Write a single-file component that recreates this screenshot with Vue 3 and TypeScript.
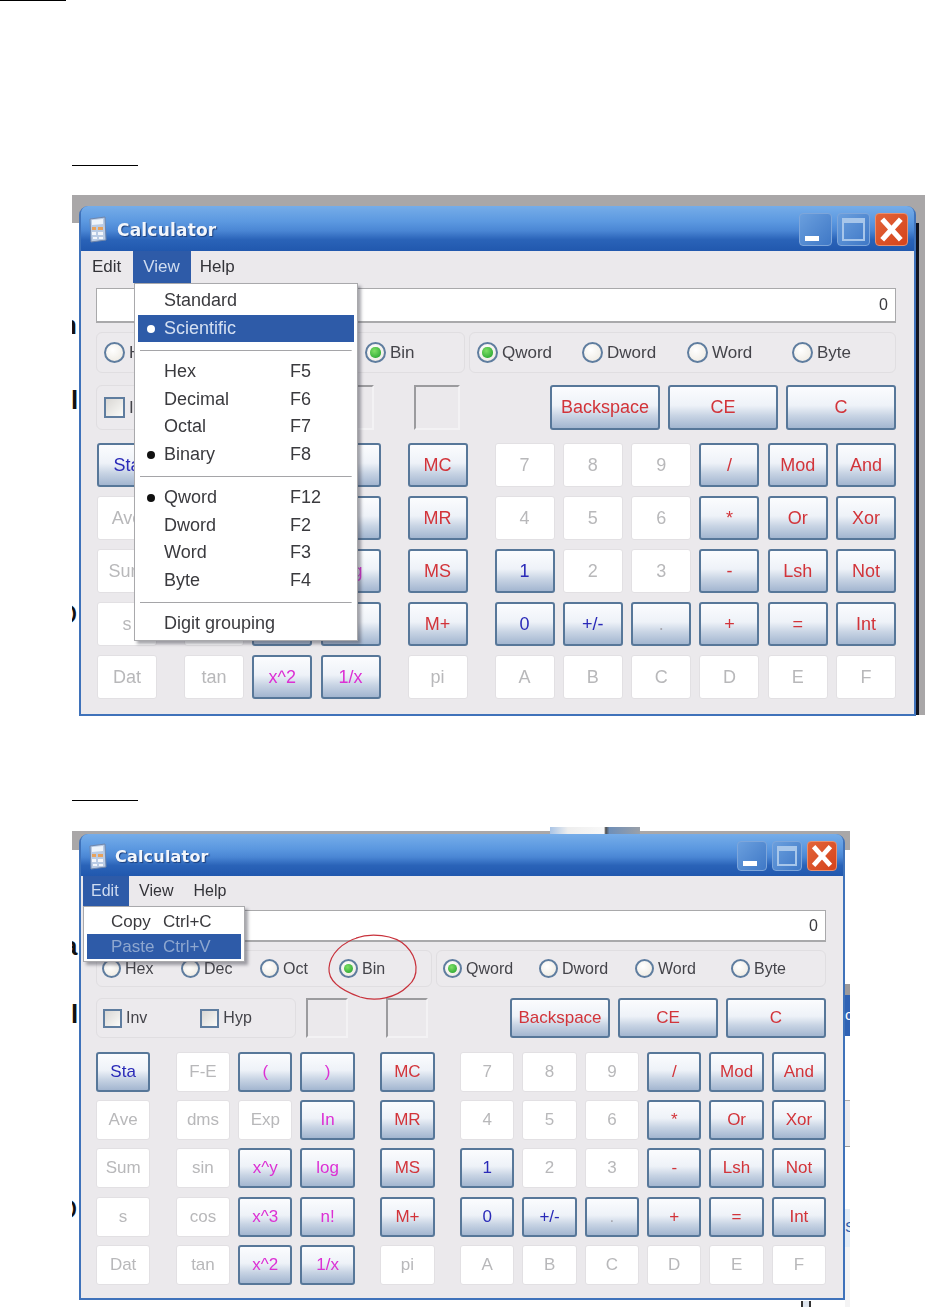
<template>
  <div class="page">
    <div class="rule rule-top"></div>
    <div class="rule rule-one"></div>

    <template v-for="win in windows" :key="win.id">
      <div v-if="win.id === 'win-b'" class="rule rule-two"></div>

      <div class="figure" :class="win.id">
        <span v-for="scrap in win.scraps" :key="scrap.text" class="scrap" :class="scrap.cls">{{ scrap.text }}</span>

        <div class="window">
          <div class="titlebar">
            <svg class="app-icon" viewBox="0 0 20 27">
              <path d="M2 3 L17 1 L18 24 L3 26 Z" fill="#b9cbe4" stroke="#6f86ab" />
              <path d="M4 4 L15 3 L15 8 L4 9 Z" fill="#eef4fb" />
              <path d="M4 11 h4 v3 h-4 z M10 11 h5 v3 h-5 z" fill="#e8a25c" />
              <path d="M4 16 h4 v3 h-4 z M10 16 h5 v3 h-5 z M5 21 h4 v2 h-4 z M11 21 h4 v2 h-4 z" fill="#f3f6fb" />
            </svg>
            <span class="title-text">Calculator</span>
            <div class="win-buttons">
              <span class="win-btn min"><i></i></span>
              <span class="win-btn max"><i></i></span>
              <span class="win-btn close">
                <svg viewBox="0 0 30 30"><path d="M6 5 L24 25 M24 5 L6 25" stroke="#fff" stroke-width="5" /></svg>
              </span>
            </div>
          </div>

          <div class="menubar">
            <span v-for="m in menuNames" :key="m" class="menubar-item" :class="{ open: m === win.openMenu }">{{ m }}</span>
          </div>

          <div class="content">
            <div class="display">0</div>

            <div class="radio-row">
              <div class="panel base-panel">
                <label v-for="r in baseRadios" :key="r" class="radio-item">
                  <span class="radio" :class="{ on: r === 'Bin' }"></span>{{ r }}
                </label>
              </div>
              <div class="panel size-panel">
                <label v-for="r in sizeRadios" :key="r" class="radio-item">
                  <span class="radio" :class="{ on: r === 'Qword' }"></span>{{ r }}
                </label>
              </div>
            </div>

            <div class="func-row">
              <div class="panel check-panel">
                <label v-for="c in ['Inv', 'Hyp']" :key="c" class="radio-item">
                  <span class="check"></span>{{ c }}
                </label>
              </div>
              <div class="inset first"></div>
              <div class="inset second"></div>
              <div class="wide-keys">
                <button v-for="k in wideKeys" :key="k" class="key wide red" type="button">{{ k }}</button>
              </div>
            </div>

            <div class="keys">
              <div v-for="(row, r) in keyRows" :key="r" class="key-row">
                <button
                  v-for="(k, i) in row"
                  :key="k.label"
                  class="key"
                  :class="[k.kind, { sep: [1, 4, 5].includes(i) }]"
                  type="button"
                >
                  {{ k.label }}
                </button>
              </div>
            </div>
          </div>

          <div class="dropdown" role="menu">
            <template v-for="(item, n) in win.menu" :key="n">
              <div v-if="item.sep" class="menu-sep"></div>
              <div v-else class="menu-item" :class="{ hot: item.hot, dimmed: item.dimmed, checked: item.checked }">
                <span>{{ item.label }}</span>
                <span>{{ item.keys }}</span>
              </div>
            </template>
          </div>

          <svg v-if="win.id === 'win-b'" class="circle-mark" viewBox="0 0 94 70">
            <path d="M30 6 C44 1 68 2 80 14 C92 26 94 44 82 54 C70 66 50 70 34 65 C14 58 2 48 3 36 C4 22 16 10 34 5" />
          </svg>
        </div>

        <div v-if="win.id === 'win-a'" class="edge-a"></div>
        <template v-else>
          <div class="edge-b">
            <i class="e1"></i><i class="e2">c</i><i class="e3"></i><i class="e4"></i><i class="e5"></i><i class="e6">S</i><i class="e7"></i>
          </div>
          <div class="top-scrap"></div>
          <div class="under-scrap"></div>
        </template>
      </div>
    </template>
  </div>
</template>

<script setup lang="ts">
type Kind = 'off' | 'red' | 'pink' | 'blue' | 'dim';

interface MenuEntry {
  label?: string;
  keys?: string;
  sep?: boolean;
  hot?: boolean;
  dimmed?: boolean;
  checked?: boolean;
}

const menuNames = ['Edit', 'View', 'Help'];
const baseRadios = ['Hex', 'Dec', 'Oct', 'Bin'];
const sizeRadios = ['Qword', 'Dword', 'Word', 'Byte'];
const wideKeys = ['Backspace', 'CE', 'C'];

const makeRow = (spec: string): { label: string; kind: Kind }[] =>
  spec.split(' ').map((part) => {
    const [label, code] = part.split('|');
    const kinds: Record<string, Kind> = { o: 'off', r: 'red', p: 'pink', b: 'blue', d: 'dim' };
    return { label, kind: kinds[code] };
  });

const keyRows = [
  makeRow('Sta|b F-E|o (|p )|p MC|r 7|o 8|o 9|o /|r Mod|r And|r'),
  makeRow('Ave|o dms|o Exp|o In|p MR|r 4|o 5|o 6|o *|r Or|r Xor|r'),
  makeRow('Sum|o sin|o x^y|p log|p MS|r 1|b 2|o 3|o -|r Lsh|r Not|r'),
  makeRow('s|o cos|o x^3|p n!|p M+|r 0|b +/-|b .|d +|r =|r Int|r'),
  makeRow('Dat|o tan|o x^2|p 1/x|p pi|o A|o B|o C|o D|o E|o F|o'),
];

const viewMenu: MenuEntry[] = [
  { label: 'Standard' },
  { label: 'Scientific', hot: true, checked: true },
  { sep: true },
  { label: 'Hex', keys: 'F5' },
  { label: 'Decimal', keys: 'F6' },
  { label: 'Octal', keys: 'F7' },
  { label: 'Binary', keys: 'F8', checked: true },
  { sep: true },
  { label: 'Qword', keys: 'F12', checked: true },
  { label: 'Dword', keys: 'F2' },
  { label: 'Word', keys: 'F3' },
  { label: 'Byte', keys: 'F4' },
  { sep: true },
  { label: 'Digit grouping' },
];

const editMenu: MenuEntry[] = [
  { label: 'Copy', keys: 'Ctrl+C' },
  { label: 'Paste', keys: 'Ctrl+V', hot: true, dimmed: true },
];

const windows = [
  {
    id: 'win-a',
    openMenu: 'View',
    menu: viewMenu,
    scraps: [
      { text: 'n', cls: 's1' },
      { text: 'l', cls: 's2' },
      { text: 'O', cls: 's3' },
    ],
  },
  {
    id: 'win-b',
    openMenu: 'Edit',
    menu: editMenu,
    scraps: [
      { text: 'a', cls: 's1' },
      { text: 'l', cls: 's2' },
      { text: 'O', cls: 's3' },
    ],
  },
];
</script>

<style>
html,
body {
  margin: 0;
  background: #fff;
}
</style>

<style scoped>
.page {
  height: 1307px;
  overflow: hidden;
  background: #fff;
  color: #3a3a3e;
  font-family: "Liberation Sans", Arial, sans-serif;
}

.rule {
  height: 1px;
  background: #000;
}

.rule-top {
  width: 66px;
}

.rule-one {
  width: 66px;
  margin: 164px 0 0 72px;
}

.rule-two {
  width: 66px;
  margin: 80px 0 0 72px;
}

.figure {
  position: relative;
  overflow: hidden;
  margin-left: 72px;
}

.win-a {
  --title-h: 43px;
  --menu-h: 32px;
  --font: 18px;
  --label-font: 17px;
  --display-h: 35px;
  --gap-1: 5px;
  --gap-2: 9px;
  --gap-3: 12px;
  --gap-4: 13px;
  --radio-h: 41px;
  --func-h: 45px;
  --key-w: 60px;
  --key-h: 44px;
  --key-gap: 8.3px;
  --key-sep: 18.7px;
  --row-gap: 9px;
  --radio: 21px;
  width: 853px;
  height: 525px;
  margin-top: 29px;
  padding: 11px 0 0 7px;
  box-sizing: border-box;
  background: linear-gradient(#a9a7a8, #a9a7a8) no-repeat 0 0 / 100% 28px;
}

.win-b {
  --title-h: 40px;
  --menu-h: 30px;
  --font: 17px;
  --label-font: 16px;
  --display-h: 32px;
  --gap-1: 4px;
  --gap-2: 8px;
  --gap-3: 11px;
  --gap-4: 14px;
  --radio-h: 37px;
  --func-h: 40px;
  --key-w: 54.3px;
  --key-h: 40px;
  --key-gap: 8.1px;
  --key-sep: 17.5px;
  --row-gap: 8.2px;
  --radio: 19px;
  width: 778px;
  height: 480px;
  margin-top: 26px;
  padding: 7px 0 0 7px;
  box-sizing: border-box;
  background: linear-gradient(#a9a7a8, #a9a7a8) no-repeat 0 4px / 100% 19px;
}

.window {
  position: relative;
  z-index: 1;
  display: flex;
  flex-direction: column;
  box-sizing: border-box;
  border: 2px solid #3f72ba;
  border-radius: 9px 9px 0 0;
  background: #ebe9ec;
  font-size: var(--font);
  filter: blur(0.4px);
}

.win-a .window {
  width: 837px;
  height: 510px;
}

.win-b .window {
  width: 766px;
  height: 466px;
}

.titlebar {
  display: flex;
  align-items: center;
  height: var(--title-h);
  margin-top: -2px;
  padding-top: 2px;
  padding-left: 7px;
  border-radius: 7px 7px 0 0;
  background: linear-gradient(#76ade9 0%, #5b98e0 35%, #4a86d4 55%, #2a63b8 75%, #2158ae 100%);
}

.app-icon {
  width: 20px;
  height: 27px;
}

.title-text {
  margin-left: 9px;
  color: #f2f6fb;
  font-family: "DejaVu Sans", Verdana, sans-serif;
  font-size: 17px;
  font-weight: 700;
  letter-spacing: 0.2px;
  text-shadow: 1px 1px 1px #1c3f7c;
}

.win-b .title-text {
  margin-left: 7px;
  font-size: 16px;
}

.win-buttons {
  display: flex;
  gap: 5px;
  margin-left: auto;
  margin-right: 6px;
}

.win-btn {
  display: block;
  position: relative;
  box-sizing: border-box;
  width: 33px;
  height: 33px;
  border: 1px solid #7ea6da;
  border-radius: 4px;
  background: linear-gradient(135deg, #6a9fde, #3f78c6);
}

.win-b .win-btn {
  width: 30px;
  height: 30px;
}

.win-btn.min i {
  position: absolute;
  left: 5px;
  bottom: 4px;
  width: 14px;
  height: 5px;
  background: #fff;
}

.win-btn.max i {
  position: absolute;
  inset: 4px;
  border: 2px solid #a7c6ea;
  border-top-width: 5px;
}

.win-btn.close {
  border-color: #e88f6e;
  background: linear-gradient(135deg, #e2643a, #d5431b);
}

.win-btn.close svg {
  display: block;
  width: 100%;
  height: 100%;
}

.menubar {
  display: flex;
  height: var(--menu-h);
  color: #333338;
  font-size: 17px;
}

.win-b .menubar {
  padding-left: 2px;
  font-size: 16px;
}

.menubar-item {
  display: flex;
  align-items: center;
  padding: 0 10px;
}

.win-a .menubar-item:first-child {
  padding: 0 12px 0 11px;
}

.win-a .menubar-item:nth-child(2) {
  padding: 0 11px 0 10px;
}

.win-a .menubar-item:last-child {
  padding-left: 9px;
}

.win-b .menubar-item:first-child {
  padding: 0 10.5px 0 8px;
}

.menubar-item.open {
  background: #2e5ba8;
  color: #cfdcf0;
}

.content {
  padding: 0 17px 0 15px;
}

.win-a .content {
  padding-right: 18px;
}

.display {
  box-sizing: border-box;
  height: var(--display-h);
  margin-top: var(--gap-1);
  padding-right: 7px;
  border: 1px solid #a9a9ab;
  border-bottom-width: 2px;
  background: #fff;
  font-size: 16px;
  line-height: calc(var(--display-h) - 3px);
  text-align: right;
}

.radio-row {
  display: flex;
  gap: 4px;
  margin-top: var(--gap-2);
}

.panel {
  box-sizing: border-box;
  height: var(--radio-h);
  border: 1px solid #e0dee1;
  border-radius: 6px;
  background: #eceaed;
}

.base-panel,
.size-panel {
  display: grid;
  align-items: center;
}

.base-panel {
  flex-shrink: 0;
}

.size-panel {
  flex: 1;
  min-width: 0;
}

.win-a .base-panel {
  width: 369px;
  padding-left: 7px;
  grid-template-columns: repeat(4, 87px);
}

.win-a .size-panel {
  padding-left: 7px;
  grid-template-columns: repeat(4, 105px);
}

.win-b .base-panel {
  width: 336px;
  padding-left: 5px;
  grid-template-columns: repeat(4, 79px);
}

.win-b .size-panel {
  padding-left: 6px;
  grid-template-columns: repeat(4, 96px);
}

.radio-item {
  display: flex;
  align-items: center;
  gap: 4px;
  color: #44444a;
  font-size: var(--label-font);
}

.radio {
  display: grid;
  place-items: center;
  box-sizing: border-box;
  width: var(--radio);
  height: var(--radio);
  border: 2px solid #5f7d9f;
  border-radius: 50%;
  background: radial-gradient(circle at 40% 35%, #fff, #ebe7de);
}

.radio.on::after {
  content: "";
  width: 60%;
  height: 60%;
  border-radius: 50%;
  background: radial-gradient(circle at 40% 35%, #7fe065, #1c9d2a);
}

.check {
  box-sizing: border-box;
  width: var(--radio);
  height: var(--radio);
  border: 2px solid #5f7d9f;
  background: linear-gradient(135deg, #d9d7d4, #fbfbf8);
}

.func-row {
  display: flex;
  height: var(--func-h);
  margin-top: var(--gap-3);
}

.check-panel {
  display: flex;
  align-items: center;
  height: 100%;
  padding-left: 7px;
}

.win-a .check-panel {
  width: 220px;
  gap: 58px;
}

.win-b .check-panel {
  width: 200px;
  padding-left: 6px;
  gap: 53px;
}

.inset {
  box-sizing: border-box;
  height: 100%;
  border: 2px solid #f3f2f4;
  border-top-color: #9b9b9e;
  border-left-color: #9b9b9e;
}

.win-a .inset.first {
  width: 44px;
  margin-left: 14px;
}

.win-a .inset.second {
  width: 46px;
  margin-left: 40px;
}

.win-b .inset.first {
  width: 42px;
  margin-left: 10px;
}

.win-b .inset.second {
  width: 42px;
  margin-left: 38px;
}

.wide-keys {
  display: flex;
  gap: 8px;
  margin-left: auto;
}

.key {
  box-sizing: border-box;
  width: var(--key-w);
  height: var(--key-h);
  padding: 0;
  border: 2px solid #577799;
  border-radius: 3px;
  background: linear-gradient(#fbfcfe 0%, #eef2f8 45%, #c8d4e4 70%, #a3b6d0 100%);
  font-family: inherit;
  font-size: var(--font);
}

.key.wide {
  height: 100%;
}

.win-a .key.wide {
  width: 110px;
}

.win-b .key.wide {
  width: 100px;
}

.key.sep {
  margin-left: var(--key-sep);
}

.key.off {
  border: 1px solid #e2e0e3;
  background: #fff;
  color: #b8b8ba;
}

.key.red {
  color: #d2343a;
}

.key.pink {
  color: #dc30d4;
}

.key.blue {
  color: #2a2ab8;
}

.key.dim {
  color: #a8a8b0;
}

.keys {
  display: flex;
  flex-direction: column;
  gap: var(--row-gap);
  margin-top: var(--gap-4);
}

.win-a .keys {
  padding-left: 1px;
}

.key-row {
  display: flex;
  gap: var(--key-gap);
}

.dropdown {
  position: absolute;
  z-index: 3;
  box-sizing: border-box;
  border: 1px solid #a9a9ac;
  background: #fff;
  box-shadow: 3px 3px 3px rgba(60, 60, 70, 0.45);
}

.win-a .dropdown {
  left: 53px;
  top: 75px;
  width: 224px;
  height: 358px;
  padding: 3px 3px;
}

.win-b .dropdown {
  left: 2px;
  top: 70px;
  width: 162px;
  height: 56px;
  padding: 2px 3px;
}

.menu-item {
  position: relative;
  display: grid;
  align-items: center;
  height: 27.5px;
  color: #3a3a3e;
}

.win-a .menu-item {
  grid-template-columns: 126px 1fr;
  padding-left: 26px;
}

.win-b .menu-item {
  grid-template-columns: 52px 1fr;
  height: 25px;
  padding-left: 24px;
}

.menu-item.hot {
  background: #2e5ba8;
  color: #d5e0f2;
}

.menu-item.dimmed {
  color: #8ea7cf;
}

.menu-item.checked::before {
  content: "";
  position: absolute;
  left: 9px;
  top: 10px;
  width: 8px;
  height: 8px;
  border-radius: 50%;
  background: #111;
}

.menu-item.hot.checked::before {
  background: #fff;
}

.menu-sep {
  height: 16px;
  background: linear-gradient(#a5a5a8, #a5a5a8) no-repeat center / 98% 1px;
}

.circle-mark {
  position: absolute;
  z-index: 2;
  left: 245px;
  top: 96px;
  width: 94px;
  height: 70px;
  fill: none;
  stroke: #c8323c;
  stroke-width: 1.2;
}

.scrap {
  position: absolute;
  z-index: 0;
  color: #111;
  font-weight: 700;
  font-size: 26px;
  line-height: 1;
}

.win-a .s1 {
  left: -11px;
  top: 117px;
}

.win-a .s2 {
  left: -1px;
  top: 192px;
}

.win-a .s3 {
  left: -18px;
  top: 404px;
  font-weight: 400;
  font-size: 30px;
}

.win-b .s1 {
  left: -9px;
  top: 106px;
}

.win-b .s2 {
  left: -1px;
  top: 174px;
}

.win-b .s3 {
  left: -18px;
  top: 367px;
  font-weight: 400;
  font-size: 30px;
}

.edge-a {
  position: absolute;
  left: 844px;
  top: 28px;
  bottom: 5px;
  width: 9px;
  border-left: 3px solid #10131f;
  box-sizing: border-box;
  background: #a9a7a8;
}

.edge-b {
  position: absolute;
  left: 773px;
  top: 157px;
  bottom: 0;
  display: flex;
  flex-direction: column;
  width: 5px;
  overflow: hidden;
  font-size: 15px;
  line-height: 1;
}

.edge-b i {
  display: block;
  font-style: normal;
}

.e1 {
  height: 11px;
  background: #9c9a9c;
}

.e2 {
  height: 41px;
  padding-top: 12px;
  box-sizing: border-box;
  background: #2f62b4;
  color: #fff;
}

.e3 {
  height: 64px;
  background: #fff;
  border-bottom: 1px solid #aaa;
}

.e4 {
  height: 45px;
  background: #ecebee;
}

.e5 {
  height: 62px;
  background: #fff;
  border-top: 1px solid #999;
}

.e6 {
  height: 38px;
  padding-top: 10px;
  box-sizing: border-box;
  background: #e4edf7;
  color: #2e5ba8;
}

.e7 {
  flex: 1;
  background: #f4f4f5;
}

.top-scrap {
  position: absolute;
  z-index: 0;
  left: 478px;
  top: 0;
  width: 90px;
  height: 8px;
  background: linear-gradient(90deg, #a9c4e6, #eeeeee 20%, #f8f8f8 60%, #4a4a4a 62%, #6f8fb8 66%, #9aa0a8 100%);
}

.under-scrap {
  position: absolute;
  left: 729px;
  top: 474px;
  width: 6px;
  height: 6px;
  border-right: 2px solid #333;
  border-left: 2px solid #333;
  background: #dfe6ef;
}
</style>
